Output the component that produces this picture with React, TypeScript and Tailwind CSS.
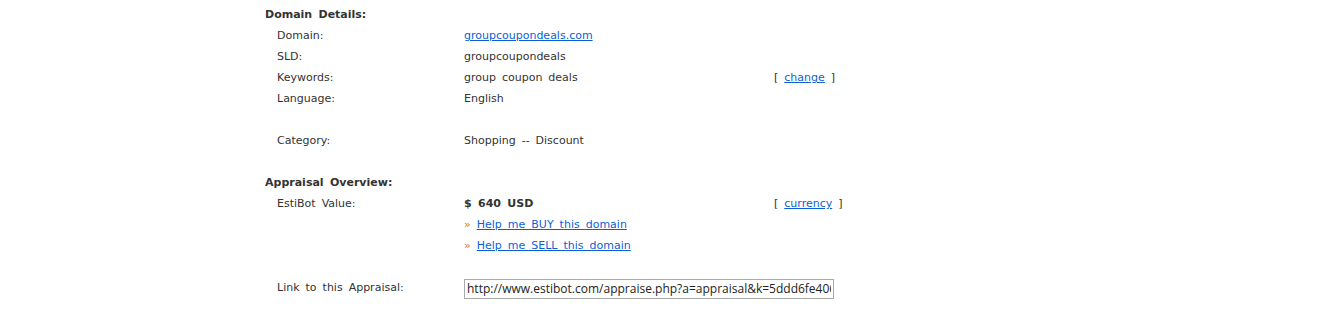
import React from 'react';

const Row = ({ label, children, extra }: { label?: string; children?: React.ReactNode; extra?: React.ReactNode }) => (
    <div className="grid grid-cols-[187px_310px_100px] h-[21px] items-center pl-3">
        <div>{label}</div>
        <div>{children}</div>
        <div>{extra}</div>
    </div>
);

const Bracket = ({ text }: { text: string }) => (
    <span>
        [ <a href="#" className="text-[#0a5fd8] underline">{text}</a> ]
    </span>
);

const Arrow = ({ text }: { text: string }) => (
    <span>
        <span className="text-[#d07a2a]">»</span> <a href="#" className="text-[#0a5fd8] underline">{text}</a>
    </span>
);

const App = () => {
    return (
        <div className="w-[1333px] h-[325px] bg-white text-[#333333] text-[11px] [word-spacing:2.5px] font-['DejaVu_Sans','Verdana',sans-serif]">
            <div className="pl-[265px] pt-[5px]">
                <div className="h-[21px] flex items-center font-bold">Domain Details:</div>
                <Row label="Domain:">
                    <a href="#" className="text-[#0a5fd8] underline">groupcoupondeals.com</a>
                </Row>
                <Row label="SLD:">groupcoupondeals</Row>
                <Row label="Keywords:" extra={<Bracket text="change" />}>group coupon deals</Row>
                <Row label="Language:">English</Row>
                <Row />
                <Row label="Category:">Shopping -- Discount</Row>
                <Row />
                <div className="h-[21px] flex items-center font-bold">Appraisal Overview:</div>
                <Row label="EstiBot Value:" extra={<Bracket text="currency" />}>
                    <span className="font-bold">$ 640 USD</span>
                </Row>
                <Row><Arrow text="Help me BUY this domain" /></Row>
                <Row><Arrow text="Help me SELL this domain" /></Row>
                <Row />
                <Row label="Link to this Appraisal:">
                    <input
                        readOnly
                        value="http://www.estibot.com/appraise.php?a=appraisal&k=5ddd6fe406ab"
                        className="w-[370px] h-[20px] border border-[#a9a9a9] px-[2px] text-[12px] text-[#222222] [word-spacing:0px] font-['Open_Sans','Liberation_Sans',sans-serif] outline-none"
                    />
                </Row>
            </div>
        </div>
    );
};

export default App;
